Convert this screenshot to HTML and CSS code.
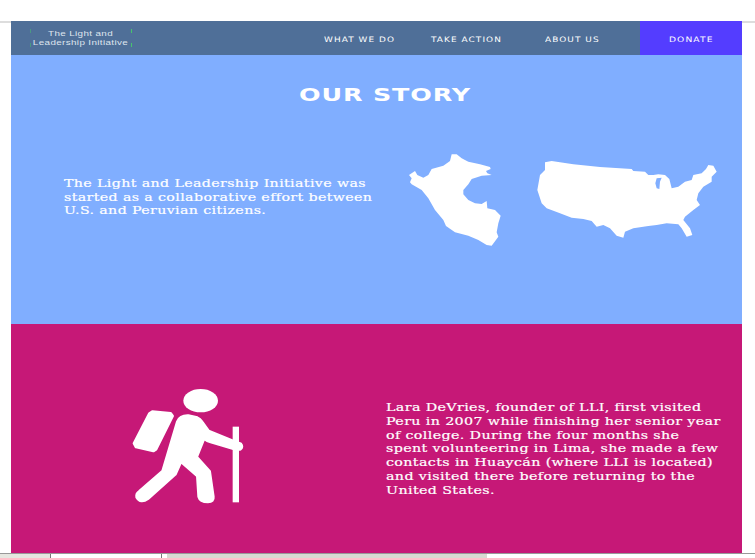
FILE: index.html
```html
<!DOCTYPE html>
<html lang="en">
<head>
    <meta charset="UTF-8">
    <meta name="viewport" content="width=device-width, initial-scale=1.0">
    <title>Our Story - The Light and Leadership Initiative</title>
    <link rel="stylesheet" href="styles.css">
</head>
<body>
    <div class="page">
        <nav class="nav">
            <a class="logo">
                <span class="logo-text">The Light and<br>Leadership Initiative</span>
                <i class="tick tick-tl"></i>
                <i class="tick tick-tr"></i>
                <i class="tick tick-bl"></i>
                <i class="tick tick-br"></i>
            </a>
            <div class="links">
                <a class="link link-what"><span>WHAT WE DO</span></a>
                <a class="link link-take"><span>TAKE ACTION</span></a>
                <a class="link link-about"><span>ABOUT US</span></a>
                <a class="link donate"><span>DONATE</span></a>
            </div>
        </nav>

        <section class="story">
            <h1><span>OUR STORY</span></h1>
            <div class="story-row">
                <p class="story-text">The Light and Leadership Initiative was<br>started as a collaborative effort between<br>U.S. and Peruvian citizens.</p>
                <svg class="maps" viewBox="0 0 990 330" width="330" height="110">
                    <path d="M155 28L170 28L185 40L205 50L240 58L270 66L272 72L258 78L262 85L275 90L245 92L215 102L205 118L190 135L190 148L205 165L225 175L245 177L260 168L262 190L285 195L302 212L295 235L290 262L295 275L275 302L260 300L235 285L205 272L165 262L138 243L130 225L105 195L85 160L65 135L35 118L30 112L35 100L27 90L45 78L52 90L70 98L85 90L95 72L130 62L150 48Z"/>
                    <path fill-rule="evenodd" d="M435 52L455 48L520 58L600 66L695 72L700 78L735 80L745 90L760 90L775 88L795 90L808 102L815 130L835 125L855 110L875 105L880 90L905 85L918 72L925 60L940 62L950 80L935 95L935 110L910 125L895 145L890 165L900 180L880 195L855 215L850 225L870 250L877 270L860 275L845 250L835 238L800 235L770 240L745 243L700 250L675 260L670 278L650 272L630 250L610 240L590 245L575 228L550 222L515 218L480 205L440 190L425 175L412 135L420 90L435 75Z M770 100L785 98L780 110L778 132L770 130L766 115Z"/>
                </svg>
            </div>
        </section>

        <section class="founder">
            <svg class="hiker" viewBox="0 0 405 390" width="135" height="130">
                <ellipse cx="242" cy="62" rx="52" ry="35"/>
                <path class="soft" d="M97 95L152 100L158 108L108 208L100 213L48 201L42 190L88 101Z"/>
                <path class="soft" d="M205 107L232 113Q240 116 246 125L266 153L345 185L362 191Q370 200 361 208L345 208L272 186Q258 182 252 176L230 231L269 274L280 350Q282 366 264 366Q240 366 236 350L232 288L183 245L166 283L84 356Q62 372 50 352Q48 340 58 334L128 273L172 125Q180 106 205 107Z"/>
                <rect x="338" y="140" width="19" height="227"/>
            </svg>
            <p class="founder-text">Lara DeVries, founder of LLI, first visited<br>Peru in 2007 while finishing her senior year<br>of college. During the four months she<br>spent volunteering in Lima, she made a few<br>contacts in Huayc&aacute;n (where LLI is located)<br>and visited there before returning to the<br>United States.</p>
        </section>
    </div>

    <div class="statusbar">
        <span class="tab"></span>
        <span class="field"></span>
        <span class="thumb"></span>
    </div>
</body>
</html>
```

FILE: styles.css
```css
html, body {
    margin: 0;
    height: 558px;
    overflow: hidden;
    background-color: white;
}

body {
    font-family: 'DejaVu Serif', serif;
    color: white;
    padding-top: 21px;
    box-sizing: border-box;
    background-image: linear-gradient(#dddddd, #dddddd);
    background-size: 100% 2px;
    background-position: 0 21px;
    background-repeat: no-repeat;
}

.page {
    margin: 0 13px 0 11px;
    height: 532px;
    display: flex;
    flex-direction: column;
}

.nav {
    height: 34px;
    background-color: #4f6f98;
    display: flex;
    justify-content: space-between;
    flex-shrink: 0;
}

.logo {
    position: relative;
    margin-left: 22px;
    width: 95px;
    align-self: center;
    text-align: center;
    font-family: 'Liberation Sans', sans-serif;
    font-size: 8px;
    line-height: 9px;
    letter-spacing: 0.3px;
    white-space: nowrap;
    color: #dfe5ee;
}

.logo-text {
    display: block;
    transform: scaleX(1.23);
}

.tick {
    position: absolute;
    width: 1px;
    height: 4px;
    background-color: #46c46e;
}

.tick-tl { left: -3px; top: 0; opacity: 0.5; }
.tick-tr { right: -4px; top: 0; }
.tick-bl { left: -3px; bottom: 0; opacity: 0.5; }
.tick-br { right: -4px; bottom: 0; }

.links {
    display: flex;
    align-items: stretch;
}

.link {
    display: flex;
    align-items: center;
    font-family: 'DejaVu Sans', sans-serif;
    font-size: 7.5px;
    letter-spacing: 0.9px;
    white-space: nowrap;
}

.link span {
    display: block;
    margin-top: 2px;
    transform: scaleX(1.19);
    transform-origin: left center;
}

.link-what { width: 107px; }
.link-take { width: 114px; }
.link-about { width: 95px; }

.donate {
    width: 102px;
    justify-content: center;
    background-color: #543dff;
}

.donate span {
    transform: scaleX(1.22);
    transform-origin: center;
}

.story {
    height: 269px;
    background-color: #80aeff;
    flex-shrink: 0;
}

h1 {
    margin: 0;
    padding: 29px 0 0 16px;
    text-align: center;
    font-family: 'DejaVu Sans', sans-serif;
    font-size: 18px;
    line-height: 21px;
    letter-spacing: 0.6px;
    font-weight: bold;
}

h1 span {
    display: inline-block;
    transform: scaleX(1.41);
}

.story-row {
    display: flex;
    justify-content: space-between;
    margin-top: 40px;
}

.story-text {
    margin: 32px 0 0 53px;
    font-size: 11.5px;
    line-height: 13.5px;
    letter-spacing: 0.3px;
    white-space: nowrap;
    -webkit-text-stroke: 0.2px white;
    transform: scaleX(1.235);
    transform-origin: left top;
}

.maps {
    margin-right: 12px;
    fill: white;
}

.founder {
    flex: 1;
    background-color: #c61877;
    display: flex;
}

.hiker {
    margin: 56px 0 0 109px;
    fill: white;
    flex-shrink: 0;
}

.soft {
    stroke: white;
    stroke-width: 8;
    stroke-linejoin: round;
}

.founder-text {
    margin: 77px 0 0 131px;
    font-size: 11.5px;
    line-height: 13.8px;
    letter-spacing: 0.3px;
    white-space: nowrap;
    -webkit-text-stroke: 0.2px white;
    transform: scaleX(1.24);
    transform-origin: left top;
}

.statusbar {
    height: 5px;
    box-sizing: border-box;
    border-top: 1px solid #999999;
    display: flex;
    background-color: white;
}

.tab {
    width: 50px;
    background-color: #e6e6e0;
    border-right: 1px solid #777777;
}

.field {
    width: 110px;
    border-right: 1px solid #777777;
}

.thumb {
    width: 320px;
    margin-left: 5px;
    background-color: #d9d9d2;
}
```
